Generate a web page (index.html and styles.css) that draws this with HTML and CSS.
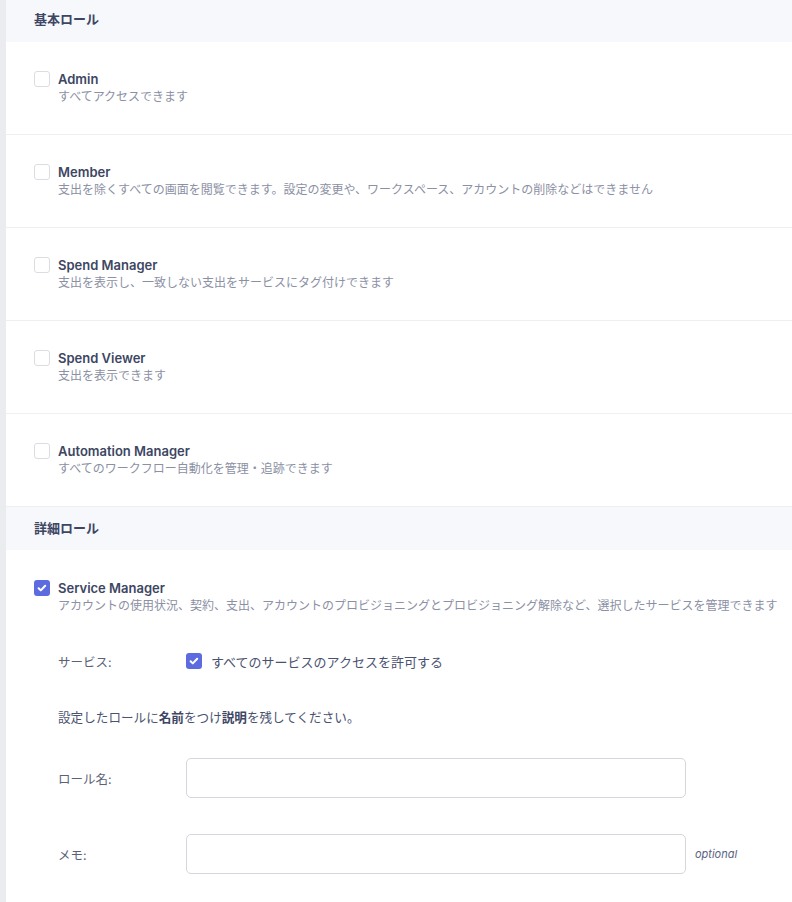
FILE: index.html
```html
<!DOCTYPE html>
<html lang="ja">
<head>
<meta charset="utf-8">
<link rel="stylesheet" href="styles.css">
</head>
<body>
<div class="page">
  <div class="strip"></div>
  <div class="content">
    <div class="section-head first">基本ロール</div>
    <div class="role">
      <span class="cb"></span>
      <div class="role-text">
        <div class="role-title">Admin</div>
        <div class="role-desc">すべてアクセスできます</div>
      </div>
    </div>
    <div class="role">
      <span class="cb"></span>
      <div class="role-text">
        <div class="role-title">Member</div>
        <div class="role-desc">支出を除くすべての画面を閲覧できます。設定の変更や、ワークスペース、アカウントの削除などはできません</div>
      </div>
    </div>
    <div class="role">
      <span class="cb"></span>
      <div class="role-text">
        <div class="role-title">Spend Manager</div>
        <div class="role-desc">支出を表示し、一致しない支出をサービスにタグ付けできます</div>
      </div>
    </div>
    <div class="role">
      <span class="cb"></span>
      <div class="role-text">
        <div class="role-title">Spend Viewer</div>
        <div class="role-desc">支出を表示できます</div>
      </div>
    </div>
    <div class="role">
      <span class="cb"></span>
      <div class="role-text">
        <div class="role-title">Automation Manager</div>
        <div class="role-desc">すべてのワークフロー自動化を管理・追跡できます</div>
      </div>
    </div>
    <div class="section-head second">詳細ロール</div>
    <div class="role open">
      <span class="cb checked"><svg viewBox="0 0 16 16" width="16" height="16"><path d="M4.6 8.2l2.2 2.2 4.4-4.6" fill="none" stroke="#fff" stroke-width="2" stroke-linecap="round" stroke-linejoin="round"/></svg></span>
      <div class="role-text">
        <div class="role-title">Service Manager</div>
        <div class="role-desc">アカウントの使用状況、契約、支出、アカウントのプロビジョニングとプロビジョニング解除など、選択したサービスを管理できます</div>
      </div>
    </div>
    <div class="detail">
      <div class="service-row">
        <span class="field-label">サービス:</span>
        <span class="cb checked"><svg viewBox="0 0 16 16" width="16" height="16"><path d="M4.6 8.2l2.2 2.2 4.4-4.6" fill="none" stroke="#fff" stroke-width="2" stroke-linecap="round" stroke-linejoin="round"/></svg></span>
        <span class="service-text">すべてのサービスのアクセスを許可する</span>
      </div>
      <p class="hint">設定したロールに<b>名前</b>をつけ<b>説明</b>を残してください。</p>
      <div class="input-row name-row">
        <span class="field-label">ロール名:</span>
        <input class="text-input" type="text">
      </div>
      <div class="input-row memo-row">
        <span class="field-label">メモ:</span>
        <input class="text-input" type="text">
        <span class="optional">optional</span>
      </div>
    </div>
  </div>
</div>
</body>
</html>
```

FILE: styles.css
```css
html, body {
  margin: 0;
  padding: 0;
  background: #ffffff;
}
body {
  font-family: Inter, "Noto Sans CJK JP", sans-serif;
  color: #3d4663;
}
.page {
  display: flex;
  min-height: 902px;
}
.strip {
  width: 6px;
  flex: none;
  background: #ebecef;
}
.content {
  flex: 1;
  min-width: 0;
}
.section-head {
  background: #f7f8fb;
  padding-left: 28px;
  font-size: 13px;
  font-weight: 700;
  color: #3d4663;
  display: flex;
  align-items: center;
}
.section-head.first {
  height: 42px;
  padding-bottom: 6px;
  box-sizing: border-box;
}
.section-head.second {
  height: 43px;
  padding-bottom: 2px;
  box-sizing: border-box;
}
.role {
  display: flex;
  gap: 8px;
  padding: 29px 0 0 28px;
  height: 93px;
  box-sizing: border-box;
  border-bottom: 1px solid #eeeff2;
}
.role.open {
  border-bottom: none;
  height: auto;
  padding-top: 30px;
}
.cb {
  flex: none;
  width: 16px;
  height: 16px;
  box-sizing: border-box;
  border: 1px solid #dcdde3;
  border-radius: 3px;
  background: #fff;
  display: inline-block;
}
.cb.checked {
  border: none;
  background: #5c6be0;
}
.cb svg {
  display: block;
}
.role-title {
  font-size: 13px;
  line-height: 16px;
  font-weight: 600;
  color: #3d4663;
}
.role-desc {
  margin-top: 1px;
  font-size: 12px;
  line-height: 18px;
  color: #8b90a4;
  white-space: nowrap;
}
.detail {
  padding-left: 52px;
}
.field-label {
  width: 128px;
  flex: none;
  font-size: 12.5px;
  color: #5b6277;
}
.service-row {
  display: flex;
  align-items: center;
  margin-top: 38px;
  height: 16px;
}
.service-text {
  margin-left: 9px;
  font-size: 13px;
  color: #4a5270;
}
.hint {
  margin: 40px 0 0;
  font-size: 12.6px;
  line-height: 18px;
  color: #4a5270;
}
.hint b {
  font-weight: 700;
  color: #3d4663;
}
.input-row {
  display: flex;
  align-items: center;
}
.name-row {
  margin-top: 31px;
}
.memo-row {
  margin-top: 36px;
}
.text-input {
  width: 500px;
  height: 40px;
  box-sizing: border-box;
  border: 1px solid #d5d7dc;
  border-radius: 5px;
  margin: 0;
  padding: 0 10px;
  font: inherit;
  background: #fff;
  outline: none;
}
.optional {
  margin-left: 9px;
  font-size: 11px;
  font-style: italic;
  color: #5a6382;
}
```
